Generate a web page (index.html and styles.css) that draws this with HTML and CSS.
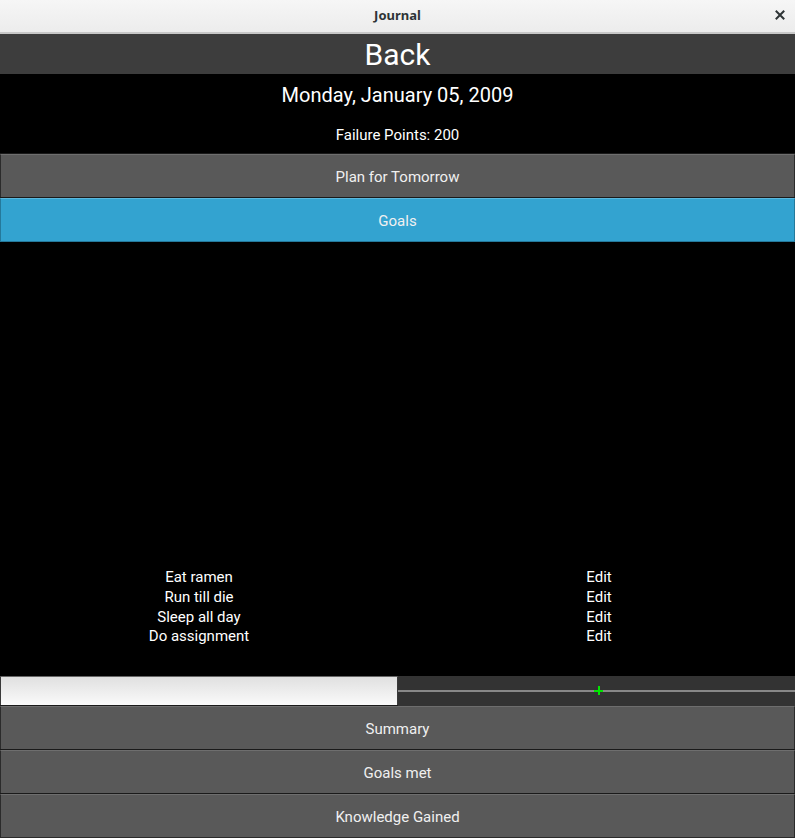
FILE: index.html
```html
<!DOCTYPE html>
<html>
<head>
<meta charset="utf-8">
<link rel="stylesheet" href="styles.css">
</head>
<body>
<div class="window">
  <div class="titlebar">
    <span class="title">Journal</span>
    <span class="close">
      <svg width="10" height="10" viewBox="0 0 10 10"><path d="M1.5 1.5 L8.5 8.5 M8.5 1.5 L1.5 8.5" stroke="#2e3436" stroke-width="2" stroke-linecap="square"/></svg>
    </span>
  </div>
  <div class="back">Back</div>
  <div class="header">
    <div class="date">Monday, January 05, 2009</div>
    <div class="points">Failure Points: 200</div>
  </div>
  <div class="btn">Plan for Tomorrow</div>
  <div class="btn active">Goals</div>
  <div class="spacer"></div>
  <div class="goals">
    <div class="row"><span>Eat ramen</span><span class="edit">Edit</span></div>
    <div class="row"><span>Run till die</span><span class="edit">Edit</span></div>
    <div class="row"><span>Sleep all day</span><span class="edit">Edit</span></div>
    <div class="row"><span>Do assignment</span><span class="edit">Edit</span></div>
  </div>
  <div class="inputrow">
    <div class="textinput"></div>
    <div class="slider">
      <div class="track"></div>
      <div class="cursor"></div>
    </div>
  </div>
  <div class="btn">Summary</div>
  <div class="btn">Goals met</div>
  <div class="btn">Knowledge Gained</div>
</div>
</body>
</html>
```
FILE: styles.css
```css
html, body {
  margin: 0;
  padding: 0;
  background: #000;
}
.window {
  width: 795px;
  height: 838px;
  display: flex;
  flex-direction: column;
  font-family: Roboto, "Liberation Sans", sans-serif;
  color: #fff;
  overflow: hidden;
}
.titlebar {
  height: 32px;
  flex: none;
  background: linear-gradient(#f6f6f6, #ececec);
  border-bottom: 2px solid #c8c8c8;
  display: flex;
  align-items: center;
  justify-content: center;
  position: relative;
}
.title {
  font-family: "Noto Sans", "DejaVu Sans", sans-serif;
  font-weight: bold;
  font-size: 13px;
  color: #2e3436;
  margin-top: -2px;
}
.close {
  position: absolute;
  right: 10px;
  top: 10px;
  width: 10px;
  height: 10px;
  display: flex;
}
.back {
  height: 40px;
  flex: none;
  background: #3d3d3d;
  display: flex;
  align-items: center;
  justify-content: center;
  font-size: 30px;
}
.header {
  height: 80px;
  flex: none;
  display: flex;
  flex-direction: column;
  align-items: center;
}
.date {
  font-size: 20px;
  margin-top: 10px;
  line-height: 23px;
}
.points {
  font-size: 15px;
  margin-top: 20px;
  line-height: 17px;
}
.btn {
  height: 42px;
  flex: none;
  background: #595959;
  border: 1px solid #2b2b2b;
  border-top-color: #6e6e6e;
  box-shadow: 0 -1px 0 #1a1a1a;
  display: flex;
  align-items: center;
  justify-content: center;
  padding-top: 2px;
  box-sizing: border-box;
  height: 44px;
  font-size: 15px;
  color: #f0f0f0;
}
.btn.active {
  background: #33a3d0;
  border-color: #25799b;
  border-top-color: #5ab8de;
}
.spacer {
  flex: 1;
}
.goals {
  display: flex;
  flex-direction: column;
  padding-bottom: 29px;
}
.row {
  display: grid;
  grid-template-columns: 398px 1fr;
  height: 19.67px;
  line-height: 19.67px;
  font-size: 15px;
  text-align: center;
}
.edit {
  padding-left: 5px;
}
.inputrow {
  height: 30px;
  flex: none;
  display: grid;
  grid-template-columns: 398px 1fr;
}
.textinput {
  background: linear-gradient(#e0e0e0, #fafafa);
  border: 1px solid #3a3a3a;
  border-top-color: #666;
}
.slider {
  background: #333;
  position: relative;
}
.track {
  position: absolute;
  left: 0;
  right: 0;
  top: 14px;
  height: 2px;
  background: #888;
}
.cursor {
  position: absolute;
  left: 196px;
  top: 10px;
  width: 9px;
  height: 9px;
  background:
    linear-gradient(#00e600, #00e600) center / 2px 9px no-repeat,
    linear-gradient(#00e600, #00e600) center / 9px 2px no-repeat;
}
```
